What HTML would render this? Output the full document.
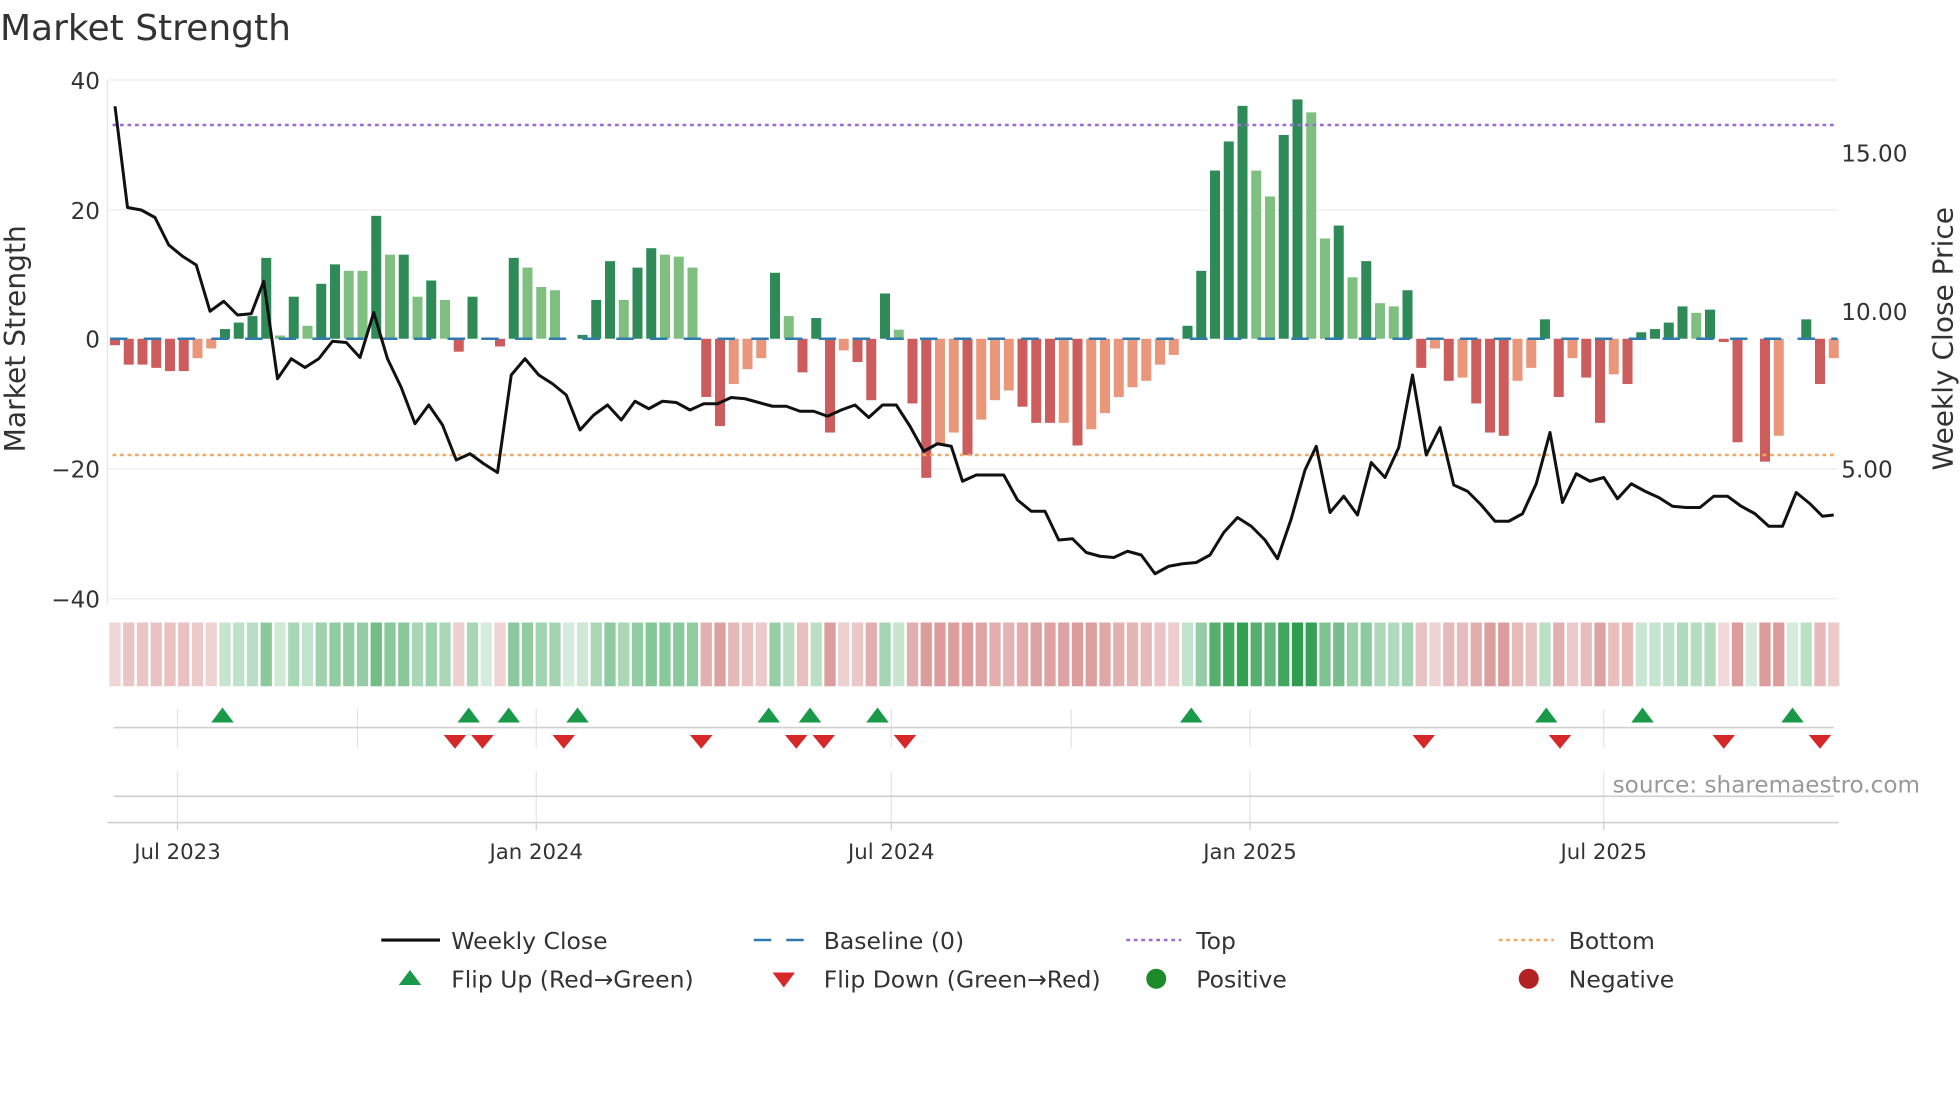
<!DOCTYPE html>
<html><head><meta charset="utf-8">
<style>
html,body{margin:0;padding:0;background:#fff;}
svg{display:block;font-family:"DejaVu Sans","Liberation Sans",sans-serif;}
</style></head>
<body>
<svg id="s" width="1960" height="1102" viewBox="0 0 1568 881.6" xmlns="http://www.w3.org/2000/svg">
<rect width="1568" height="882" fill="#fff"/>
<text x="0" y="32" font-size="28.8" fill="#333">Market Strength</text>
<g stroke="#ececec" stroke-width="1">
<line x1="86" y1="64" x2="1470" y2="64"/>
<line x1="86" y1="168" x2="1470" y2="168"/>
<line x1="86" y1="375" x2="1470" y2="375"/>
<line x1="86" y1="479" x2="1470" y2="479"/>
</g>
<line x1="86" y1="64" x2="86" y2="483" stroke="#e6e6e6"/>
<g font-size="18.5" fill="#333" text-anchor="end">
<text x="80" y="71">40</text><text x="80" y="175">20</text><text x="80" y="278">0</text>
<text x="80" y="382">−20</text><text x="80" y="486">−40</text>
</g>
<g font-size="18.5" fill="#333">
<text x="1473" y="129">15.00</text><text x="1473" y="256">10.00</text><text x="1473" y="382">5.00</text>
</g>
<text transform="translate(20,271) rotate(-90)" font-size="22.5" fill="#333" text-anchor="middle">Market Strength</text>
<text transform="translate(1562,271) rotate(-90)" font-size="22.4" fill="#333" text-anchor="middle">Weekly Close Price</text>
<g id="bars"></g>
<line x1="88" y1="271" x2="1470" y2="271" stroke="#2f7bb0" stroke-width="2" stroke-dasharray="14 13"/>
<line x1="90" y1="100" x2="1468" y2="100" stroke="#9b6bd6" stroke-width="2" stroke-dasharray="3 3"/>
<line x1="90" y1="364" x2="1468" y2="364" stroke="#f0a866" stroke-width="2" stroke-dasharray="3 3"/>
<polyline id="price" fill="none" stroke="#111" stroke-width="2.4" stroke-linejoin="round"/>
<g id="heat"></g>
<g stroke="#e4e4e4" stroke-width="1">
<line x1="142" y1="567" x2="142" y2="598"/><line x1="286" y1="567" x2="286" y2="598"/>
<line x1="429" y1="567" x2="429" y2="598"/><line x1="713" y1="567" x2="713" y2="598"/>
<line x1="857" y1="567" x2="857" y2="598"/><line x1="1000" y1="567" x2="1000" y2="598"/>
<line x1="1283" y1="567" x2="1283" y2="598"/>
<line x1="142" y1="617" x2="142" y2="658"/><line x1="429" y1="617" x2="429" y2="658"/>
<line x1="713" y1="617" x2="713" y2="658"/><line x1="1000" y1="617" x2="1000" y2="658"/>
<line x1="1283" y1="617" x2="1283" y2="658"/>
</g>
<line x1="91" y1="582" x2="1467" y2="582" stroke="#cfcfcf" stroke-width="1.3"/>
<line x1="91" y1="637" x2="1467" y2="637" stroke="#cfcfcf" stroke-width="1.3"/>
<line x1="86" y1="658" x2="1471" y2="658" stroke="#cfcfcf" stroke-width="1.3"/>
<g id="flips"></g>
<text x="1536" y="634" font-size="18.5" fill="#999" text-anchor="end">source: sharemaestro.com</text>
<g font-size="17" fill="#333" text-anchor="middle">
<line x1="142" y1="658" x2="142" y2="664" stroke="#ccc"/><text x="142" y="687">Jul 2023</text>
<line x1="429" y1="658" x2="429" y2="664" stroke="#ccc"/><text x="429" y="687">Jan 2024</text>
<line x1="713" y1="658" x2="713" y2="664" stroke="#ccc"/><text x="713" y="687">Jul 2024</text>
<line x1="1000" y1="658" x2="1000" y2="664" stroke="#ccc"/><text x="1000" y="687">Jan 2025</text>
<line x1="1283" y1="658" x2="1283" y2="664" stroke="#ccc"/><text x="1283" y="687">Jul 2025</text>
</g>
<g font-size="18.8" fill="#333">
<line x1="305" y1="752" x2="352" y2="752" stroke="#111" stroke-width="2.5"/>
<text x="361" y="759">Weekly Close</text>
<line x1="603" y1="752" x2="647" y2="752" stroke="#2f7bb0" stroke-width="2" stroke-dasharray="14 12"/>
<text x="659" y="759">Baseline (0)</text>
<line x1="901" y1="752" x2="945" y2="752" stroke="#9b6bd6" stroke-width="2" stroke-dasharray="3 3"/>
<text x="957" y="759">Top</text>
<line x1="1199" y1="752" x2="1243" y2="752" stroke="#f0a866" stroke-width="2" stroke-dasharray="3 3"/>
<text x="1255" y="759">Bottom</text>
<polygon points="319,788 337,788 328,776" fill="#1a9a48"/>
<text x="361" y="790">Flip Up (Red→Green)</text>
<polygon points="618,778 636,778 627,790" fill="#d62828"/>
<text x="659" y="790">Flip Down (Green→Red)</text>
<circle cx="925" cy="783" r="8" fill="#1e8a2a"/>
<text x="957" y="790">Positive</text>
<circle cx="1223" cy="783" r="8" fill="#b22222"/>
<text x="1255" y="790">Negative</text>
</g>
</svg>
<script>
var NS="http://www.w3.org/2000/svg";
function el(t,a,p){var e=document.createElementNS(NS,t);for(var k in a)e.setAttribute(k,a[k]);p.appendChild(e);return e;}
var d=[[-1,'R'],[-4,'R'],[-4,'R'],[-4.5,'R'],[-5,'R'],[-5,'R'],[-3,'r'],[-1.5,'r'],[1.5,'G'],[2.5,'G'],[3.5,'G'],[12.5,'G'],[0.5,'g'],[6.5,'G'],[2,'g'],[8.5,'G'],[11.5,'G'],[10.5,'g'],[10.5,'g'],[19,'G'],[13,'g'],[13,'G'],[6.5,'g'],[9,'G'],[6,'g'],[-2,'R'],[6.5,'G'],[0,'G'],[-1.2,'R'],[12.5,'G'],[11,'g'],[8,'g'],[7.5,'g'],[0,'g'],[0.6,'G'],[6,'G'],[12,'G'],[6,'g'],[11,'G'],[14,'G'],[13,'g'],[12.7,'g'],[11,'g'],[-9,'R'],[-13.5,'R'],[-7,'r'],[-4.7,'r'],[-3,'r'],[10.2,'G'],[3.5,'g'],[-5.2,'R'],[3.2,'G'],[-14.5,'R'],[-1.8,'r'],[-3.6,'R'],[-9.5,'R'],[7,'G'],[1.4,'g'],[-10,'R'],[-21.5,'R'],[-16.5,'r'],[-14.5,'r'],[-18,'R'],[-12.5,'r'],[-9.5,'r'],[-8,'r'],[-10.5,'R'],[-13,'R'],[-13,'R'],[-13,'r'],[-16.5,'R'],[-14,'r'],[-11.5,'r'],[-9,'r'],[-7.5,'r'],[-6.5,'r'],[-4,'r'],[-2.5,'r'],[2,'G'],[10.5,'G'],[26,'G'],[30.5,'G'],[36,'G'],[26,'g'],[22,'g'],[31.5,'G'],[37,'G'],[35,'g'],[15.5,'g'],[17.5,'G'],[9.5,'g'],[12,'G'],[5.5,'g'],[5,'g'],[7.5,'G'],[-4.5,'R'],[-1.5,'r'],[-6.5,'R'],[-6,'r'],[-10,'R'],[-14.5,'R'],[-15,'R'],[-6.5,'r'],[-4.5,'r'],[3,'G'],[-9,'R'],[-3,'r'],[-6,'R'],[-13,'R'],[-5.5,'r'],[-7,'R'],[1,'G'],[1.5,'G'],[2.5,'G'],[5,'G'],[4,'g'],[4.5,'G'],[-0.5,'R'],[-16,'R'],[0,'R'],[-19,'R'],[-15,'r'],[0,'r'],[3,'G'],[-7,'R'],[-3,'r']];
var col={G:'#2e8b57',g:'#7fc080',R:'#cd5c5c',r:'#e9967a'};
var B=document.getElementById('bars'),H=document.getElementById('heat');
d.forEach(function(v,i){
 var x=92+11*i,h=Math.abs(v[0])*5.175;
 if(h>0) el('rect',{x:x-4,y:v[0]>0?271-h:271,width:8,height:h,fill:col[v[1]]},B);
 var a=0.2+0.8*Math.pow(Math.min(Math.abs(v[0])/37,1),0.75);
 var base=v[0]>=0?[46,158,78]:[196,90,90];
 if(v[0]<0) a=Math.min(a,0.6);
 var c=base.map(function(b){return Math.round(255-a*(255-b));});
 el('rect',{x:x-4.5,y:498,width:9,height:51,fill:'rgb('+c.join(',')+')'},H);
});
var p=[[92,85],[102,166],[113,168],[124,174],[135,196],[146,205],[157,212],[168,249],[179,241],[190,252],[201,251],[211,225],[222,303],[233,287],[244,294],[255,287],[266,273],[277,274],[288,286],[299,250],[310,287],[321,310],[332,339],[343,324],[354,340],[365,368],[376,363],[387,371],[398,378],[409,300],[420,287],[431,300],[442,307],[453,316],[464,344],[475,332],[486,324],[497,336],[508,321],[519,327],[530,321],[541,322],[552,328],[563,323],[574,323],[585,318],[596,319],[607,322],[618,325],[629,325],[640,329],[651,329],[662,333],[673,328],[684,324],[695,334],[706,324],[717,324],[728,341],[739,361],[750,355],[761,357],[770,385],[781,380],[792,380],[803,380],[814,400],[825,409],[836,409],[847,432],[858,431],[869,442],[880,445],[891,446],[902,441],[913,444],[924,459],[935,453],[946,451],[957,450],[968,444],[979,426],[990,414],[1001,421],[1012,432],[1022,447],[1033,415],[1044,376],[1053,357],[1064,410],[1075,397],[1086,412],[1097,370],[1108,382],[1119,358],[1130,300],[1141,364],[1152,342],[1163,388],[1174,393],[1185,404],[1196,417],[1207,417],[1218,411],[1229,387],[1240,346],[1250,402],[1261,379],[1272,385],[1283,382],[1294,399],[1305,387],[1316,393],[1327,398],[1338,405],[1349,406],[1360,406],[1371,397],[1382,397],[1393,405],[1404,411],[1415,421],[1426,421],[1437,394],[1448,403],[1458,413],[1467,412]];
document.getElementById('price').setAttribute('points',p.map(function(q){return q.join(',');}).join(' '));
var F=document.getElementById('flips');
[178,375,407,462,615,648,702,953,1237,1314,1434].forEach(function(x){el('polygon',{points:(x-9)+',578 '+(x+9)+',578 '+x+',566',fill:'#1a9a48'},F);});
[364,386,451,561,637,659,724,1139,1248,1379,1456].forEach(function(x){el('polygon',{points:(x-9)+',588 '+(x+9)+',588 '+x+',599',fill:'#d62828'},F);});
</script>
</body></html>
